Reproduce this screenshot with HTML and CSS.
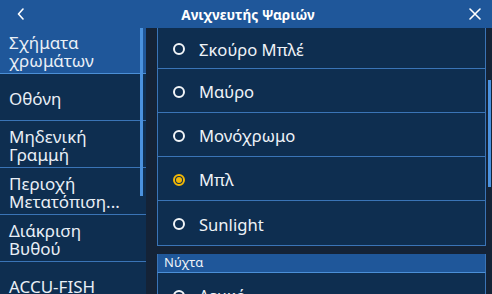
FILE: index.html
```html
<!DOCTYPE html>
<html lang="el">
<head>
<meta charset="utf-8">
<link rel="stylesheet" href="styles.css">
</head>
<body>
<div class="app">
  <header class="topbar">
    <button class="icon-btn back" aria-label="Πίσω">
      <svg width="10" height="12" viewBox="0 0 10 12"><path d="M7 1 L2.5 6 L7 11" fill="none" stroke="#fff" stroke-width="1.6" stroke-linecap="round" stroke-linejoin="round"/></svg>
    </button>
    <h1 class="title">Ανιχνευτής Ψαριών</h1>
    <button class="icon-btn close" aria-label="Κλείσιμο">
      <svg width="12" height="12" viewBox="0 0 12 12"><path d="M1 1 L11 11 M11 1 L1 11" fill="none" stroke="#fff" stroke-width="1.6" stroke-linecap="round"/></svg>
    </button>
  </header>
  <main class="body">
    <nav class="menu">
      <div class="menu-item selected"><span>Σχήματα<br>χρωμάτων</span></div>
      <div class="menu-item"><span>Οθόνη</span></div>
      <div class="menu-item"><span>Μηδενική<br>Γραμμή</span></div>
      <div class="menu-item"><span>Περιοχή<br>Μετατόπιση...</span></div>
      <div class="menu-item"><span>Διάκριση<br>Βυθού</span></div>
      <div class="menu-item"><span>ACCU-FISH</span></div>
      <div class="menu-thumb"></div>
    </nav>
    <section class="content">
      <div class="list">
        <div class="group">
          <div class="row first"><span class="radio"></span><span>Σκούρο Μπλέ</span></div>
          <div class="row"><span class="radio"></span><span>Μαύρο</span></div>
          <div class="row"><span class="radio"></span><span>Μονόχρωμο</span></div>
          <div class="row"><span class="radio on"></span><span>Μπλ</span></div>
          <div class="row last"><span class="radio"></span><span>Sunlight</span></div>
        </div>
        <div class="group-head">Νύχτα</div>
        <div class="group">
          <div class="row"><span class="radio"></span><span>Λευκό</span></div>
        </div>
      </div>
      <div class="track"><div class="thumb"></div></div>
    </section>
  </main>
</div>
</body>
</html>
```
FILE: styles.css
```css
* { box-sizing: border-box; }
html, body { margin: 0; padding: 0; }
body {
  width: 492px;
  height: 294px;
  overflow: hidden;
  background: #142337;
  font-family: "Noto Sans", "Open Sans", sans-serif;
  color: #eef3f8;
}
.app { width: 492px; height: 294px; display: flex; flex-direction: column; }
.topbar {
  height: 28px;
  flex: none;
  background: #1f579a;
  display: flex;
  align-items: center;
  justify-content: space-between;
  padding: 0 10px 0 14px;
}
.icon-btn {
  background: none;
  border: 0;
  padding: 0;
  width: 14px;
  height: 14px;
  display: flex;
  align-items: center;
  justify-content: center;
}
.title {
  margin: 0;
  font-size: 13.6px;
  font-weight: 700;
  color: #fff;
}
.body { flex: 1; display: flex; min-height: 0; gap: 11px; }
.menu {
  position: relative;
  width: 146px;
  flex: none;
  background: #0e2e50;
  overflow: hidden;
}
.menu-item {
  height: 47px;
  border-bottom: 1px solid #3a74b6;
  display: flex;
  align-items: center;
  padding: 3px 0 0 9px;
  font-size: 17px;
  line-height: 18px;
  color: #e9eff6;
}
.menu-item.selected {
  height: 46px;
  background: #1f579a;
  border-bottom: 1px solid #4b8fd6;
  padding-top: 2px;
}
.menu-thumb {
  position: absolute;
  left: 140px;
  top: 0;
  width: 3px;
  height: 168px;
  background: #4b92de;
}
.content { flex: 1; display: flex; min-width: 0; }
.list { flex: 1; display: flex; flex-direction: column; overflow: hidden; }
.group {
  background: #0e2e50;
  border: 1px solid #3a74b6;
  border-top: 0;
}
.row {
  height: 44px;
  border-bottom: 1px solid #3a74b6;
  display: flex;
  align-items: center;
  gap: 14px;
  padding: 2px 0 0 15px;
  font-size: 16.6px;
}
.row.first { height: 41px; }
.row.last { border-bottom: 0; height: 44px; }
.radio {
  width: 12px;
  height: 12px;
  border: 2px solid #f2f5f8;
  border-radius: 50%;
  flex: none;
  display: flex;
  align-items: center;
  justify-content: center;
}
.radio.on { border-color: #f2b705; }
.radio.on::after {
  content: "";
  width: 6px;
  height: 6px;
  border-radius: 50%;
  background: #f2b705;
}
.group-head {
  margin-top: 8px;
  height: 19px;
  background: #1f579a;
  border-left: 1px solid #3a74b6;
  border-right: 1px solid #3a74b6;
  border-bottom: 1px solid #4b8fd6;
  font-size: 13px;
  line-height: 17px;
  padding-left: 6px;
  flex: none;
}
.track {
  width: 6px;
  flex: none;
  position: relative;
  background: #142337;
}
.thumb {
  position: absolute;
  left: 2px;
  top: 52px;
  width: 3px;
  height: 107px;
  background: #4b92de;
}
```
